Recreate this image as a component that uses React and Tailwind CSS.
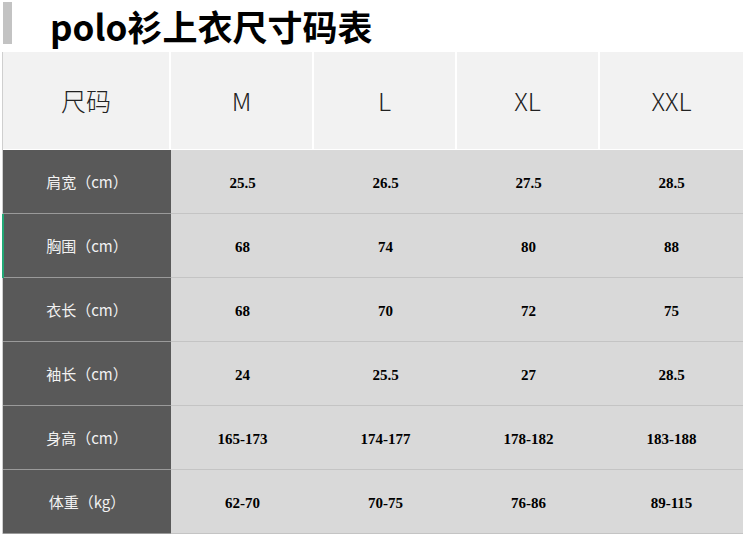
const sizes = ["M", "L", "XL", "XXL"];

const rows = [
  { label: "肩宽（cm）", values: ["25.5", "26.5", "27.5", "28.5"] },
  { label: "胸围（cm）", values: ["68", "74", "80", "88"], mark: true },
  { label: "衣长（cm）", values: ["68", "70", "72", "75"] },
  { label: "袖长（cm）", values: ["24", "25.5", "27", "28.5"] },
  { label: "身高（cm）", values: ["165-173", "174-177", "178-182", "183-188"] },
  { label: "体重（kg）", values: ["62-70", "70-75", "76-86", "89-115"] },
];

const cjk = { fontFamily: '"Noto Sans CJK SC", "Noto Sans", sans-serif' };
const serif = { fontFamily: '"Liberation Serif", serif' };

export default function App() {
  return (
    <div className="w-[744px] h-[534px] bg-white overflow-hidden" style={cjk}>
      <div className="h-[52px] flex items-start">
        <div className="ml-[3px] mt-[2px] w-[9px] h-[42px] bg-[#c3c3c3]" />
        <h1 className="ml-[38px] text-[35px] font-bold leading-[52px] text-black">
          polo衫上衣尺寸码表
        </h1>
      </div>

      <div className="ml-[2px] w-[741px] border-l border-[#cfcfcf]">
        <div className="grid grid-cols-[168px_repeat(4,143px)] h-[98px] border-b border-white">
          <div className="bg-[#f2f2f2] border-r-2 border-white flex items-center justify-center text-[25px] font-light text-[#222]">
            尺码
          </div>
          {sizes.map((s, i) => (
            <div
              key={s}
              className={
                "bg-[#f2f2f2] flex items-center justify-center text-[25px] font-light text-[#222] " +
                (i < 3 ? "border-r-2 border-white" : "")
              }
            >
              {s}
            </div>
          ))}
        </div>

        {rows.map((r) => (
          <div
            key={r.label}
            className="relative grid grid-cols-[168px_repeat(4,143px)] h-[64px]"
          >
            {r.mark && (
              <div className="absolute -left-[1px] top-0 w-[2px] h-[64px] bg-[#22a876]" />
            )}
            <div className="bg-[#595959] border-b border-[#9a9a9a] flex items-center justify-center pt-[1px] text-[15px] text-[#f2f2f2]">
              {r.label}
            </div>
            {r.values.map((v, i) => (
              <div
                key={i}
                className="bg-[#d9d9d9] border-b border-[#c4c4c4] flex items-center justify-center pt-[3px] text-[15px] font-bold text-black"
                style={serif}
              >
                {v}
              </div>
            ))}
          </div>
        ))}
      </div>
    </div>
  );
}
